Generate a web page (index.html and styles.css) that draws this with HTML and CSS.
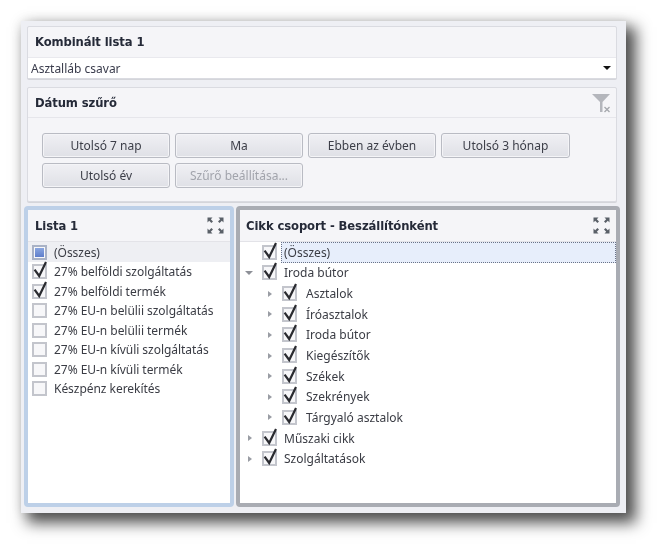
FILE: index.html
```html
<!DOCTYPE html>
<html lang="hu">
<head>
<meta charset="utf-8">
<title>Irányítópult</title>
<link rel="stylesheet" href="styles.css">
</head>
<body>
<svg class="defs" width="0" height="0" aria-hidden="true">
  <symbol id="check" viewBox="0 0 16 18"><path d="M2.6 8.6 L7.2 15 L14 1" fill="none" stroke="#2a2b30" stroke-width="2.2"/></symbol>
  <symbol id="expand" viewBox="0 0 17 17">
    <path d="M0.5 0.5h5l-1.7 1.7 2.2 2.2-1.6 1.6-2.2-2.2-1.7 1.7zM16.5 0.5v5l-1.7-1.7-2.2 2.2-1.6-1.6 2.2-2.2-1.7-1.7zM0.5 16.5v-5l1.7 1.7 2.2-2.2 1.6 1.6-2.2 2.2 1.7 1.7zM16.5 16.5h-5l1.7-1.7-2.2-2.2 1.6-1.6 2.2 2.2 1.7-1.7z" fill="#5a6068"/>
  </symbol>
</svg>
<main class="frame">
  <section class="card combo-card">
    <h2 class="card-title">Kombinált lista 1</h2>
    <div class="combo"><span>Asztalláb csavar</span><i class="caret"></i></div>
  </section>
  <section class="card date-card">
    <header class="date-head">
      <h2 class="card-title">Dátum szűrő</h2>
      <svg class="filter" width="19" height="19" viewBox="0 0 19 19" aria-hidden="true">
        <path d="M0 0H18L10.5 8V18H8V8Z" fill="#b4b6bc"/>
        <path d="M12.5 13 L17.5 18 M17.5 13 L12.5 18" stroke="#a6a8ae" stroke-width="1.4"/>
      </svg>
    </header>
    <div class="btn-grid">
      <button class="btn">Utolsó 7 nap</button>
      <button class="btn">Ma</button>
      <button class="btn">Ebben az évben</button>
      <button class="btn">Utolsó 3 hónap</button>
      <button class="btn">Utolsó év</button>
      <button class="btn off">Szűrő beállítása...</button>
    </div>
  </section>
  <div class="panels">
    <section class="panel blue">
      <header class="panel-head"><h2 class="card-title">Lista 1</h2><svg class="expand" width="17" height="17"><use href="#expand"/></svg></header>
      <ul class="list">
        <li class="row all"><span class="box part"><i></i></span>(Összes)</li>
        <li class="row"><span class="box"><svg class="tick"><use href="#check"/></svg></span>27% belföldi szolgáltatás</li>
        <li class="row"><span class="box"><svg class="tick"><use href="#check"/></svg></span>27% belföldi termék</li>
        <li class="row"><span class="box"></span>27% EU-n belülii szolgáltatás</li>
        <li class="row"><span class="box"></span>27% EU-n belülii termék</li>
        <li class="row"><span class="box"></span>27% EU-n kívüli szolgáltatás</li>
        <li class="row"><span class="box"></span>27% EU-n kívüli termék</li>
        <li class="row"><span class="box"></span>Készpénz kerekítés</li>
      </ul>
    </section>
    <section class="panel gray">
      <header class="panel-head"><h2 class="card-title">Cikk csoport - Beszállítónként</h2><svg class="expand" width="17" height="17"><use href="#expand"/></svg></header>
      <ul class="tree">
        <li class="node"><i class="arrow none"></i><span class="box"><svg class="tick"><use href="#check"/></svg></span><span class="label focus">(Összes)</span></li>
        <li class="node"><i class="arrow open"></i><span class="box"><svg class="tick"><use href="#check"/></svg></span><span class="label">Iroda bútor</span></li>
        <li class="node sub"><i class="arrow"></i><span class="box"><svg class="tick"><use href="#check"/></svg></span><span class="label">Asztalok</span></li>
        <li class="node sub"><i class="arrow"></i><span class="box"><svg class="tick"><use href="#check"/></svg></span><span class="label">Íróasztalok</span></li>
        <li class="node sub"><i class="arrow"></i><span class="box"><svg class="tick"><use href="#check"/></svg></span><span class="label">Iroda bútor</span></li>
        <li class="node sub"><i class="arrow"></i><span class="box"><svg class="tick"><use href="#check"/></svg></span><span class="label">Kiegészítők</span></li>
        <li class="node sub"><i class="arrow"></i><span class="box"><svg class="tick"><use href="#check"/></svg></span><span class="label">Székek</span></li>
        <li class="node sub"><i class="arrow"></i><span class="box"><svg class="tick"><use href="#check"/></svg></span><span class="label">Szekrények</span></li>
        <li class="node sub"><i class="arrow"></i><span class="box"><svg class="tick"><use href="#check"/></svg></span><span class="label">Tárgyaló asztalok</span></li>
        <li class="node"><i class="arrow"></i><span class="box"><svg class="tick"><use href="#check"/></svg></span><span class="label">Műszaki cikk</span></li>
        <li class="node"><i class="arrow"></i><span class="box"><svg class="tick"><use href="#check"/></svg></span><span class="label">Szolgáltatások</span></li>
      </ul>
    </section>
  </div>
</main>
</body>
</html>
```
FILE: styles.css
```css
* { box-sizing: border-box; }
html, body { margin: 0; height: 100%; background: #fff; overflow: hidden; }
body { padding: 21px 0 0 21px; font-family: "Noto Sans", "DejaVu Sans", sans-serif; font-size: 12px; color: #3a3c44; }
.defs { position: absolute; }
.frame {
  width: 605px; height: 492px; background: #eeeff4;
  padding: 5px 6px 6px 3px;
  box-shadow: 8px 8px 14px 2px rgba(0,0,0,.68), 0 0 14px rgba(0,0,0,.1);
  display: flex; flex-direction: column;
  filter: blur(.45px);
}
.card { margin: 0 3px 0 3px; background: #f5f5f8; border: 1px solid #dadbe1; border-radius: 2px; box-shadow: 0 1px 0 #d4d5da; }
.card-title { margin: 0; font: bold 11.6px/16px "DejaVu Sans", sans-serif; color: #252a38; letter-spacing: -.1px; }
.combo-card { height: 53px; display: flex; flex-direction: column; }
.combo-card .card-title { padding: 7px 0 0 7px; height: 31px; border-bottom: 1px solid #e9e9ee; }
.combo { flex: 1; background: #fff; display: flex; align-items: center; justify-content: space-between; padding: 0 5px 0 3px; color: #3a3c4c; }
.caret { width: 0; height: 0; border: 4px solid transparent; border-top: 4px solid #111; border-bottom: 0; }
.date-card { margin-top: 8px; height: 115px; }
.date-head { height: 30px; border-bottom: 1px solid #e6e6eb; display: flex; align-items: center; justify-content: space-between; padding: 0 5px 0 7px; }
.filter { margin-top: 2px; }
.btn-grid { display: grid; grid-template-columns: 128px 128px 128px 129px; grid-auto-rows: 25px; gap: 5px; padding: 15px 0 0 14px; }
.btn {
  font: inherit; color: #3c3e48; padding: 0;
  border: 1px solid #b9bbc3; border-radius: 3px;
  background: linear-gradient(#f0f0f4, #dfe0e6);
  box-shadow: inset 0 0 0 1px #f4f4f7;
}
.btn.off { color: #a2a4ac; }
.panels { flex: 1; display: flex; gap: 2px; margin-top: 4px; min-height: 0; }
.panel { background: #fff; border: 4px solid #aab0b8; border-radius: 4px; display: flex; flex-direction: column; }
.panel.blue { width: 210px; border-color: #bdd0e8; }
.panel.gray { width: 384px; border-color: #a9acb3; }
.panel-head { height: 32px; flex: none; background: #f5f5f8; border-bottom: 1px solid #e3e3e8; display: flex; align-items: center; justify-content: space-between; padding: 0 6px 0 7px; }
.gray .panel-head { padding-left: 6px; }
.list, .tree { list-style: none; margin: 0; padding: 0; }
.row { height: 19.5px; display: flex; align-items: center; padding-left: 4px; letter-spacing: -.04px; }
.row.all { background: #eeeff3; height: 20px; }
.box { position: relative; width: 15px; height: 15px; flex: none; margin-right: 7px; background: #f7f7f9; border: 2px solid #c3c5cc; }
.box.part { border-color: #a9b2c6; display: grid; place-items: center; }
.box.part i { width: 9px; height: 9px; background: linear-gradient(#8aa6e0, #5f7ecb); }
.tick { position: absolute; left: -2px; top: -5px; width: 16px; height: 18px; }
.node { height: 20.65px; display: flex; align-items: center; padding-left: 6px; }
.node.sub { padding-left: 26px; }
.arrow { width: 0; height: 0; flex: none; margin: 0 10px 0 2px; border: 3.5px solid transparent; border-left: 4px solid #9a9da4; border-right: 0; }
.arrow.open { border: 4px solid transparent; border-top: 4px solid #8d9097; border-bottom: 0; margin-left: -1px; margin-right: 9px; }
.arrow.none { visibility: hidden; }
.node .box { margin-right: 0; }
.label { padding-left: 9px; }
.node:not(.sub) .label { padding-left: 7px; }
.node .label.focus { flex: 1; margin-left: 4px; padding-left: 2px; height: 21px; line-height: 19px; background: #e7eefb; border: 1px dotted #6a7388; }
```
